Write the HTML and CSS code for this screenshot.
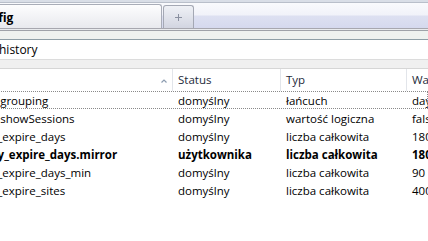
FILE: index.html
```html
<!DOCTYPE html>
<html lang="pl">
<head>
    <meta charset="UTF-8">
    <title>about:config</title>
    <link rel="stylesheet" href="styles.css">
</head>
<body>
    <div class="tabstrip">
        <div class="tab"><span class="tab-label">about:config</span></div>
        <div class="newtab">
            <svg width="7" height="7" viewBox="0 0 7 7"><path d="M3.5 0v7M0 3.5h7" stroke="#8a90a0" stroke-width="1"/></svg>
        </div>
    </div>
    <div class="tabline"></div>
    <div class="toolbar"></div>

    <div class="filter"><span class="filter-text">history</span></div>
    <div class="band"></div>

    <div class="list">
        <div class="row head">
            <div class="cell name">
                <svg class="sort" width="6" height="4" viewBox="0 0 6 4"><polyline points="0.5,3.5 3,1 5.5,3.5" fill="none" stroke="#8c9cb0" stroke-width="1.2"/></svg>
            </div>
            <div class="cell">Status</div>
            <div class="cell">Typ</div>
            <div class="cell">Wartość</div>
        </div>
        <div id="rows"></div>
    </div>

    <script>
        const prefs = [
            { name: "browser.history.grouping", status: "domyślny", type: "łańcuch", value: "day" },
            { name: "browser.history.showSessions", status: "domyślny", type: "wartość logiczna", value: "false" },
            { name: "browser.history_expire_days", status: "domyślny", type: "liczba całkowita", value: "180" },
            { name: "browser.history_expire_days.mirror", status: "użytkownika", type: "liczba całkowita", value: "180", user: true },
            { name: "browser.history_expire_days_min", status: "domyślny", type: "liczba całkowita", value: "90" },
            { name: "browser.history_expire_sites", status: "domyślny", type: "liczba całkowita", value: "40000" }
        ];

        function displayPrefs() {
            const container = document.getElementById('rows');
            prefs.forEach((pref, index) => {
                const row = document.createElement('div');
                row.className = 'row';
                if (pref.user) row.classList.add('user');
                if (index === 0) row.classList.add('focused');
                row.innerHTML = `
                    <div class="cell name">${pref.name}</div>
                    <div class="cell">${pref.status}</div>
                    <div class="cell">${pref.type}</div>
                    <div class="cell">${pref.value}</div>
                `;
                container.appendChild(row);
            });
        }

        displayPrefs();
    </script>
</body>
</html>
```
FILE: styles.css
```css
body {
    font-family: 'Open Sans', 'Noto Sans', sans-serif;
    font-size: 11.5px;
    margin: 0;
    padding: 0;
    background: #fff;
    color: #000;
    width: 428px;
    height: 241px;
    overflow: hidden;
}

.tabstrip {
    height: 28px;
    box-sizing: border-box;
    padding-top: 4px;
    display: flex;
    align-items: flex-end;
    background: linear-gradient(to bottom, #d9dee7 0, #d9dee7 2px, #b9bfca 2px, #b9bfca 3px, #f9fafd 3px, #f1f2f9 15px, #dde0f1 16px, #d5d9ee 28px);
}

.tab {
    width: 162px;
    height: 24px;
    box-sizing: border-box;
    border: 1px solid #a9adb8;
    border-left: none;
    border-bottom: none;
    border-radius: 0 3px 0 0;
    background: linear-gradient(to bottom, #fdfdfe, #e8e9ee);
    display: flex;
    align-items: center;
    padding-top: 2px;
    overflow: hidden;
    white-space: nowrap;
}

.tab-label {
    font-weight: 700;
    font-size: 12px;
    margin-left: -62px;
}

.newtab {
    width: 31px;
    height: 23px;
    margin-left: 1px;
    box-sizing: border-box;
    border: 1px solid #a4a8b4;
    border-bottom: none;
    border-radius: 3px 3px 0 0;
    background: linear-gradient(to bottom, #eff1f6, #d2d5e1);
    display: flex;
    align-items: center;
    justify-content: center;
}

.tabline {
    height: 3px;
    background: linear-gradient(to bottom, #a7a7af 0, #a7a7af 1px, #e9ebee 1px, #e9ebee 2px, #9ea2a8 2px);
}

.toolbar {
    height: 8px;
    background: #eef2ef;
    border-bottom: 1px solid #8e9fa6;
}

.filter {
    height: 19px;
    background: #fff;
    border-bottom: 1px solid #dcdcdc;
    display: flex;
    align-items: center;
    font-size: 12px;
}

.filter-text {
    margin-left: -1px;
}

.band {
    height: 8px;
    background: #f0f0f0;
    border-bottom: 1px solid #d6d6d6;
}

.list {
    margin-left: -87px;
}

.row {
    display: grid;
    grid-template-columns: 260px 108px 126px 100px;
    height: 18px;
    align-items: center;
    white-space: nowrap;
}

.row .cell {
    padding-left: 5px;
    overflow: hidden;
}

.row .cell.name {
    padding-left: 0;
    position: relative;
}

.row.head {
    height: 22px;
    color: #1e2a3a;
}

.row.head .cell {
    height: 22px;
    line-height: 22px;
    border-right: 1px solid #e2e5ea;
    box-sizing: border-box;
}

.sort {
    position: absolute;
    right: 5px;
    top: 10px;
}

.row.focused {
    outline: 1px dotted #8a8a8a;
    outline-offset: -1px;
}

.row.user {
    font-weight: 700;
}
```
